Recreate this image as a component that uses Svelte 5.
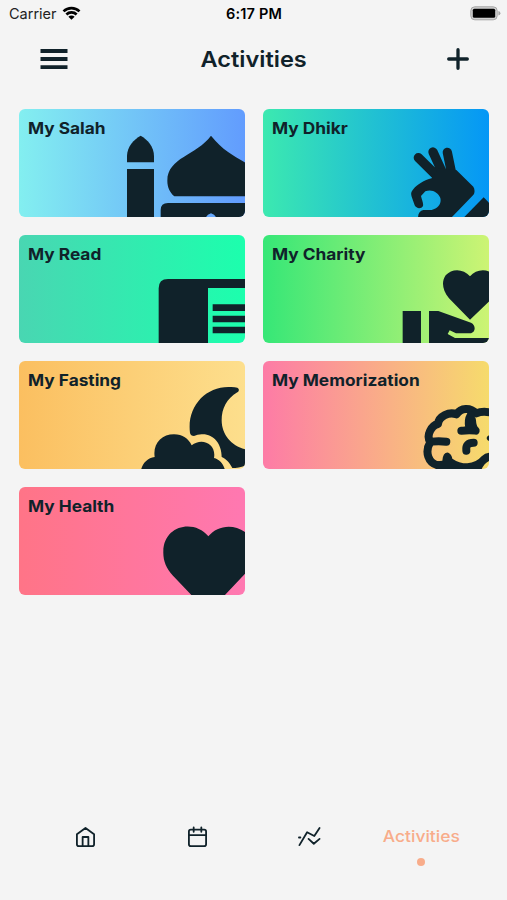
<script lang="ts">
  interface Activity {
    id: string
    label: string
    from: string
    to: string
  }

  const activities: Activity[] = [
    { id: 'salah', label: 'My Salah', from: '#83eff0', to: '#629cfe' },
    { id: 'dhikr', label: 'My Dhikr', from: '#3ce9b0', to: '#0597f6' },
    { id: 'read', label: 'My Read', from: '#49d6b2', to: '#1cffad' },
    { id: 'charity', label: 'My Charity', from: '#36e777', to: '#cdf474' },
    { id: 'fasting', label: 'My Fasting', from: '#fbbf60', to: '#fddf8d' },
    { id: 'memorization', label: 'My Memorization', from: '#fd7ba6', to: '#f6db6c' },
    { id: 'health', label: 'My Health', from: '#ff7487', to: '#ff78b1' },
  ]
</script>

<div class="screen">
  <div class="status-bar">
    <div class="carrier">
      <span>Carrier</span>
      <svg width="19" height="15" viewBox="0 0 20 15">
        <g fill="none" stroke="#000" stroke-width="2.8">
          <path d="M1.6 5.3a12 12 0 0 1 16.8 0" />
          <path d="M4.6 8.6a7.7 7.7 0 0 1 10.8 0" />
        </g>
        <path d="M10 14.2l-3.3-3.3a4.7 4.7 0 0 1 6.6 0z" />
      </svg>
    </div>
    <span class="time">6:17 PM</span>
    <svg class="battery" width="31" height="15" viewBox="0 0 31 15">
      <rect x="0.8" y="0.8" width="26.4" height="13" rx="4" fill="#d2d2d2" stroke="#a5a5a5" />
      <rect x="2.8" y="2.8" width="22.4" height="9" rx="1.5" />
      <path d="M28.4 5v4.6q2-.6 2-2.3t-2-2.3z" fill="#a5a5a5" />
    </svg>
  </div>

  <header>
    <button aria-label="Menu">
      <svg width="28" height="22" viewBox="0 0 28 22">
        <path d="M.5 3h27M.5 11h27M.5 19.2h27" stroke="#10222a" stroke-width="3.8" />
      </svg>
    </button>
    <h1><span>Activities</span></h1>
    <button aria-label="Add activity">
      <svg width="22" height="22" viewBox="0 0 22 22">
        <path d="M11 1.7v18.6M1.7 11h18.6" stroke="#10222a" stroke-width="3.3" stroke-linecap="round" />
      </svg>
    </button>
  </header>

  <main>
    {#each activities as activity, index (activity.id)}
      <div class="card" style="background: linear-gradient(90deg, {activity.from}, {activity.to})">
        <h2>{activity.label}</h2>
        <svg class="art" viewBox="{index % 2 ? 24 : 27} 27 678 324">
          {#if activity.id === 'salah'}
            <path d="M392 107C372 118 351 140 351 168V187H432V168C432 140 412 118 392 107Z" />
            <path d="M351 207H432V354H351Z" />
            <path d="M603 107C560 166 472 172 472 242C472 262 480 278 493 289H710V191C670 165 640 153 603 107Z" />
            <path d="M452 354V330Q452 309 474 309H710V354H619Q616 344 603 340Q590 344 587 354Z" />
          {:else if activity.id === 'dhikr'}
            <g fill="none" stroke="#10222a" stroke-width="28" stroke-linecap="round">
              <path d="M490 173L550 232M534 156L561 215M577 157L590 220" />
            </g>
            <path d="M530 235C508 240 485 255 476 266C468 275 467 280 470 290L479 316C484 326 498 328 504 318C506 310 500 298 498 288L511 274C530 266 550 277 556 294C560 310 550 325 530 330H505C495 332 489 340 489 354H588L654 286C660 280 660 268 655 260L604 210L550 205Z" />
            <path d="M625 354L686 292L706 312V354Z" />
          {:else if activity.id === 'read'}
            <path d="M446 354V187Q446 159 474 159H708V186H594V354Z" />
            <path d="M608 235H708V255H608ZM608 269H708V289H608ZM608 302H708V322H608Z" />
          {:else if activity.id === 'charity'}
            <path d="M443 255H498V354H443Z" />
            <path d="M522 255H550L648 290C664 297 662 322 645 322H603L584 313L578 324L600 336H706V354H522Z" />
            <path d="M645 281L582 217C560 190 560 165 572 148C590 127 625 127 645 151C660 133 685 128 706 138V223Z" />
          {:else if activity.id === 'fasting'}
            <path d="M540 243C530 165 585 105 655 105Q673 104 682 107C688 110 688 117 682 121C650 140 635 170 635 205C635 248 665 284 708 292V340C695 345 680 348 667 348C660 333 648 320 635 315C635 275 610 245 575 247Q562 248 552 252Q542 252 540 243Z" />
            <path d="M393 354C398 333 413 318 434 315C428 275 455 247 492 247C518 247 535 260 545 280C575 255 620 275 612 318C628 322 640 335 645 354Z" />
          {:else if activity.id === 'memorization'}
            <g fill="none" stroke="#10222a" stroke-width="24" stroke-linecap="round" stroke-linejoin="round">
              <path d="M550 340C520 335 508 300 526 270C512 250 530 220 549 216C551 193 583 178 604 187C618 167 645 165 664 184Q682 176 710 182" />
              <path d="M530 269Q550 266 574 269M634 296Q631 272 656 272" />
              <path d="M647 190Q638 205 643 228Q638 236 619 236Q645 233 662 236Q652 226 651 205" />
            </g>
            <path d="M525 330L562 326Q564 300 580 302Q590 306 592 320Q612 334 637 334Q664 332 680 313Q692 301 708 302V324Q687 332 679 354H550Q532 345 525 330Z" />
            <path d="M708 248Q694 251 695 259Q696 267 708 269Z" />
          {:else}
            <path d="M545 352L489 293C468 270 459 247 460 220C461 142 552 122 595 175C622 142 672 135 710 166V282L644 352Z" />
          {/if}
        </svg>
      </div>
    {/each}
  </main>

  <nav>
    <button aria-label="Home">
      <svg width="21" height="22" viewBox="0 0 22 22">
        <path d="M2 8.2L11 1.5l9 6.7v10.3q0 2-2 2H4q-2 0-2-2zM8 20v-9h6v9" />
      </svg>
    </button>
    <button aria-label="Calendar">
      <svg width="21" height="22" viewBox="0 0 22 22">
        <path d="M4 3.2h14q2 0 2 2v13.3q0 2-2 2H4q-2 0-2-2V5.2q0-2 2-2zM2 9h18M7 1v4.5M15 1v4.5" />
      </svg>
    </button>
    <button aria-label="Statistics">
      <svg width="23" height="22" viewBox="0 0 24 22">
        <path d="M1.5 19.5L9.5 6l7.5 4L22.5 1.5M11 13l5.5 5 6-5M1 11.5h1.5" />
      </svg>
    </button>
    <button class="active">
      <span class="label">Activities</span>
      <span class="dot"></span>
    </button>
  </nav>
</div>

<style>
  :global(body) {
    margin: 0;
    background: #f4f4f4;
  }

  .screen {
    display: flex;
    flex-direction: column;
    height: 900px;
    background: #f4f4f4;
    color: #10222a;
    font-family: Inter, 'Liberation Sans', sans-serif;
  }

  button {
    display: flex;
    justify-content: center;
    padding: 0;
    border: none;
    background: none;
    color: inherit;
    font: inherit;
  }

  .status-bar {
    display: grid;
    grid-template-columns: 1fr auto 1fr;
    align-items: center;
    height: 27px;
    padding: 0 6px 0 9px;
    color: #000;
    font-size: 14.5px;
  }

  .carrier {
    display: flex;
    align-items: center;
    gap: 5px;
    color: #222;
  }

  .time {
    margin-right: 2px;
    font-weight: 600;
    letter-spacing: 0.2px;
  }

  .battery {
    justify-self: end;
  }

  header {
    display: grid;
    grid-template-columns: 28px 1fr 22px;
    align-items: center;
    height: 63px;
    padding: 0 38px 1px 40px;
  }

  h1 {
    margin: 0 7px 0 0;
    font-size: 22px;
    font-weight: 600;
    line-height: 28px;
    text-align: center;
  }

  h1 span {
    display: inline-block;
    transform: scaleX(1.07);
  }

  main {
    display: grid;
    grid-template-columns: 226px 226px;
    grid-auto-rows: 108px;
    gap: 17.9px 18px;
    padding: 18px 18px 0 19px;
  }

  .card {
    position: relative;
    overflow: hidden;
    border-radius: 6px;
  }

  .card h2 {
    width: max-content;
    margin: 9px 0 0 9px;
    font-size: 16px;
    font-weight: 700;
    line-height: 20px;
    transform: scaleX(1.08);
    transform-origin: left;
  }

  .art {
    position: absolute;
    inset: 0;
    width: 100%;
    height: 100%;
    fill: #10222a;
  }

  nav {
    display: grid;
    grid-template-columns: repeat(4, 1fr);
    margin-top: auto;
    height: 74px;
    padding: 0 30px 0 29px;
  }

  nav svg {
    fill: none;
    stroke: #10222a;
    stroke-width: 1.9;
    stroke-linecap: round;
    stroke-linejoin: round;
  }

  nav .active {
    flex-direction: column;
    align-items: center;
    justify-content: flex-start;
    gap: 11px;
    height: 44px;
    color: #f8ac8a;
  }

  .label {
    font-size: 16px;
    font-weight: 500;
    line-height: 21px;
    transform: scaleX(1.09);
  }

  .dot {
    width: 8px;
    height: 8px;
    border-radius: 50%;
    background: currentColor;
  }
</style>
